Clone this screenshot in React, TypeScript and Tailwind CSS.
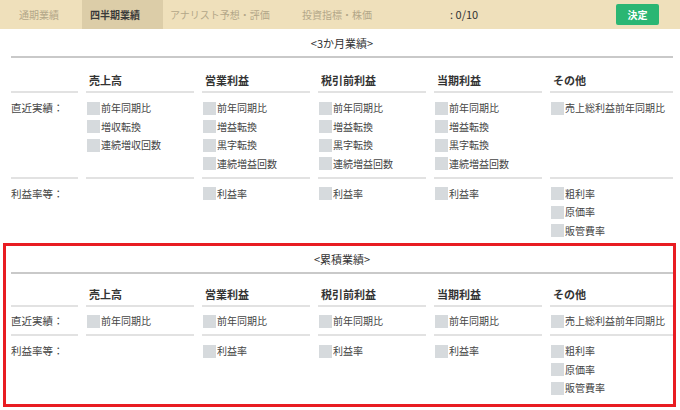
import React from "react";

type Col = { head: string; recent: string[]; rates: string[] };

const quarterCols: Col[] = [
  { head: "売上高", recent: ["前年同期比", "増収転換", "連続増収回数"], rates: [] },
  { head: "営業利益", recent: ["前年同期比", "増益転換", "黒字転換", "連続増益回数"], rates: ["利益率"] },
  { head: "税引前利益", recent: ["前年同期比", "増益転換", "黒字転換", "連続増益回数"], rates: ["利益率"] },
  { head: "当期利益", recent: ["前年同期比", "増益転換", "黒字転換", "連続増益回数"], rates: ["利益率"] },
  { head: "その他", recent: ["売上総利益前年同期比"], rates: ["粗利率", "原価率", "販管費率"] },
];

const cumulativeCols: Col[] = [
  { head: "売上高", recent: ["前年同期比"], rates: [] },
  { head: "営業利益", recent: ["前年同期比"], rates: ["利益率"] },
  { head: "税引前利益", recent: ["前年同期比"], rates: ["利益率"] },
  { head: "当期利益", recent: ["前年同期比"], rates: ["利益率"] },
  { head: "その他", recent: ["売上総利益前年同期比"], rates: ["粗利率", "原価率", "販管費率"] },
];

function Item({ label }: { label: string }) {
  return (
    <div className="flex h-[18.5px] items-center">
      <span className="mr-px h-[13px] w-[13px] shrink-0 bg-[#d6dadd]" />
      <span className="text-[10px] leading-none text-[#444]">{label}</span>
    </div>
  );
}

function Section({ title, cols, headPt, rowPt }: { title: string; cols: Col[]; headPt: string; rowPt: string }) {
  return (
    <div>
      <div className="text-center text-[11px] leading-4 text-[#333]">{title}</div>
      <div className="mt-[5px] h-[2px] bg-[#c9c9c9]" />
      <div className="grid grid-cols-[67px_108px_108px_108px_108px_1fr] gap-x-2">
        {/* header row */}
        <div className={`border-b-2 border-[#e2e2e2] pb-[3px] ${headPt}`}>
          <div className="h-4" />
        </div>
        {cols.map((c) => (
          <div key={c.head} className={`border-b-2 border-[#e2e2e2] pb-[3px] pl-[3px] ${headPt}`}>
            <div className="text-[11px] font-bold leading-4 text-[#333]">{c.head}</div>
          </div>
        ))}

        {/* recent results */}
        <div className={`border-b-2 border-[#e2e2e2] pb-[4px] ${rowPt}`}>
          <div className="flex h-[18.5px] items-center text-[10.5px] text-[#444]">直近実績：</div>
        </div>
        {cols.map((c) => (
          <div key={c.head + "r"} className={`border-b-2 border-[#e2e2e2] pb-[4px] pl-px ${rowPt}`}>
            {c.recent.map((r) => (
              <Item key={r} label={r} />
            ))}
          </div>
        ))}

        {/* margins */}
        <div className="pt-[5.5px]">
          <div className="flex h-[18.5px] items-center text-[10.5px] text-[#444]">利益率等：</div>
        </div>
        {cols.map((c) => (
          <div key={c.head + "m"} className="pl-px pt-[5.5px]">
            {c.rates.map((r) => (
              <Item key={r} label={r} />
            ))}
          </div>
        ))}
      </div>
    </div>
  );
}

export default function App() {
  return (
    <div className="h-[410px] w-[680px] overflow-hidden bg-white font-['Noto_Sans_CJK_JP','Noto_Sans',sans-serif]">
      {/* TOP BAR */}
      <div className="flex h-[29px] items-center bg-[#efe0bb] text-[10px]">
        <div className="flex h-full w-[82px] items-center pl-[19px] text-[#b3a789]">通期業績</div>
        <div className="flex h-full w-[81px] items-center bg-[#dccda8] pl-[8px] font-bold text-[#3a3a3a]">四半期業績</div>
        <div className="flex h-full w-[139px] items-center pl-[7px] text-[#b3a789]">アナリスト予想・評価</div>
        <div className="flex h-full w-[148px] items-center text-[#b3a789]">投資指標・株価</div>
        <div className="text-[11px] text-[#333]">: 0/10</div>
        <button className="ml-auto mr-[21px] flex h-[21px] w-[43px] items-center justify-center rounded-[2px] bg-[#2bb673] text-[10px] font-bold text-white">
          決定
        </button>
      </div>

      {/* 3 MONTH */}
      <div className="pl-[11px] pr-[7px] pt-[6px]">
        <Section title="<3か月業績>" cols={quarterCols} headPt="pt-[14px]" rowPt="pt-[6px]" />
      </div>

      {/* CUMULATIVE */}
      <div className="ml-[3px] mr-[4px] mt-[3px] border-[3px] border-[#e81c22] pb-[7px] pl-[5px] pt-[5px]">
        <Section title="<累積業績>" cols={cumulativeCols} headPt="pt-[12px]" rowPt="pt-[4.75px]" />
      </div>
    </div>
  );
}
